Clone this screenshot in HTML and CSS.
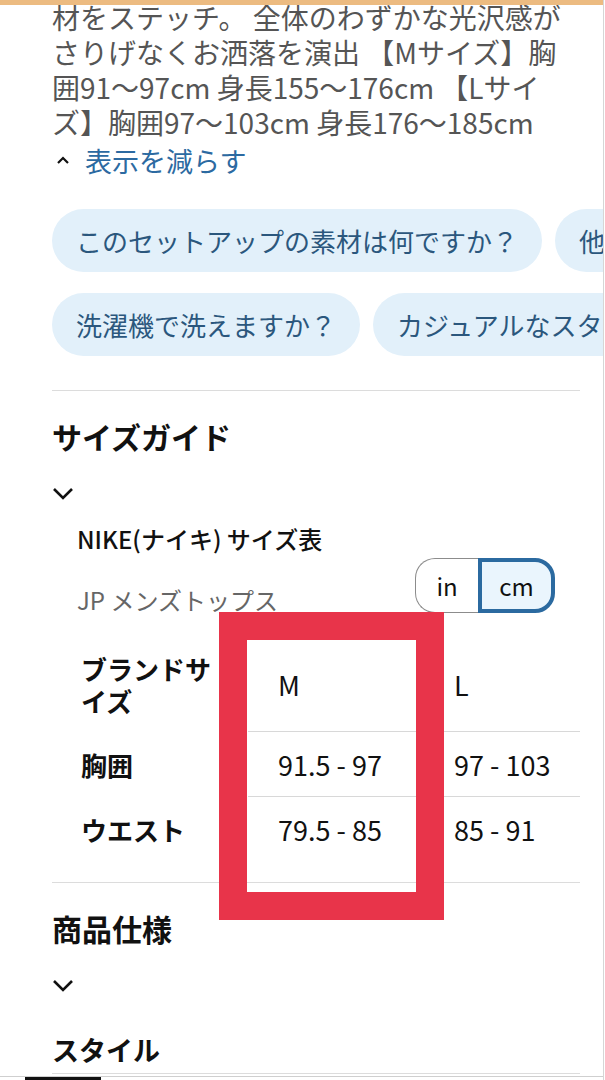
FILE: index.html
```html
<!DOCTYPE html>
<html lang="ja">
<head>
<meta charset="utf-8">
<title>サイズガイド</title>
<link rel="stylesheet" href="styles.css">
</head>
<body>
<div class="page">
  <div class="top-bar"></div>
  <div class="content">
    <p class="desc">材をステッチ。 全体のわずかな光沢感がさりげなくお洒落を演出 【Mサイズ】胸囲91〜97cm 身長155〜176cm 【Lサイズ】胸囲97〜103cm 身長176〜185cm</p>
    <a class="less" href="#">
      <svg class="caret-up" width="12" height="8" viewBox="0 0 12 8"><path d="M1 7 L6 2 L11 7" fill="none" stroke="#111" stroke-width="2.2"/></svg>
      <span>表示を減らす</span>
    </a>

    <div class="chips">
      <div class="chip-row">
        <span class="chip">このセットアップの素材は何ですか？</span>
        <span class="chip">他の色はありますか？</span>
      </div>
      <div class="chip-row">
        <span class="chip">洗濯機で洗えますか？</span>
        <span class="chip">カジュアルなスタイルに合いますか？</span>
      </div>
    </div>

    <div class="divider first"></div>

    <h2 class="section-title">サイズガイド</h2>
    <div class="chevron"><svg width="22" height="13" viewBox="0 0 22 13"><path d="M2 2 L11 11 L20 2" fill="none" stroke="#111" stroke-width="2.6"/></svg></div>

    <div class="size-guide">
      <h3 class="brand-title">NIKE(ナイキ) サイズ表</h3>
      <div class="chart-head">
        <span class="chart-name">JP メンズトップス</span>
        <div class="toggle">
          <span class="seg seg-in">in</span>
          <span class="seg seg-cm">cm</span>
        </div>
      </div>
      <div class="size-table">
        <div class="cell head">ブランドサイズ</div>
        <div class="cell val line">M</div>
        <div class="cell val line">L</div>
        <div class="cell head">胸囲</div>
        <div class="cell val line">91.5 - 97</div>
        <div class="cell val line">97 - 103</div>
        <div class="cell head">ウエスト</div>
        <div class="cell val">79.5 - 85</div>
        <div class="cell val">85 - 91</div>
      </div>
    </div>

    <div class="divider second"></div>

    <h2 class="section-title spec">商品仕様</h2>
    <div class="chevron"><svg width="22" height="13" viewBox="0 0 22 13"><path d="M2 2 L11 11 L20 2" fill="none" stroke="#111" stroke-width="2.6"/></svg></div>
    <h3 class="sub-title">スタイル</h3>
    <div class="divider third"></div>
  </div>
  <div class="bottom-strip"><span class="thumb"></span></div>
  <div class="highlight"></div>
</div>
</body>
</html>
```

FILE: styles.css
```css
html, body {
  margin: 0;
  padding: 0;
  background: #fff;
}

body {
  font-family: "Noto Sans CJK JP", "Noto Sans", sans-serif;
  color: #111;
}

.page {
  position: relative;
  width: 603px;
  height: 1080px;
  border-right: 1px solid #d6d6d6;
  overflow: hidden;
}

.top-bar {
  position: absolute;
  top: 0;
  left: 0;
  right: 0;
  height: 5px;
  background: #ecbb81;
}

.content {
  padding-left: 52px;
  width: 528px;
}

.desc {
  margin: 0;
  font-size: 28px;
  line-height: 35px;
  color: #555;
}

.less {
  display: flex;
  align-items: center;
  height: 40px;
  text-decoration: none;
  color: #2c6aa1;
  font-size: 27px;
}

.caret-up {
  margin-left: 5px;
  margin-right: 16px;
}

.chips {
  margin-top: 29px;
  margin-right: -23px;
  display: flex;
  flex-direction: column;
  gap: 21px;
}

.chip-row {
  display: flex;
  gap: 13px;
  overflow: hidden;
}

.chip {
  flex: none;
  padding: 14px 24px;
  border-radius: 32px;
  background: #e2f0fa;
  color: #2b577d;
  font-size: 26px;
  line-height: 35px;
  white-space: nowrap;
}

.divider {
  height: 1px;
  background: #dcdcdc;
}

.divider.first {
  margin-top: 34px;
}

.divider.second {
  margin-top: 20px;
}

.divider.third {
  margin-top: 4px;
}

.section-title {
  margin: 25px 0 0;
  font-size: 30px;
  line-height: 40px;
  font-weight: 700;
  color: #111;
}

.chevron {
  margin-top: 25px;
  height: 24px;
  display: flex;
  align-items: center;
}

.size-guide {
  padding-left: 25px;
}

.brand-title {
  margin: 17px 0 0;
  font-size: 24px;
  line-height: 34px;
  font-weight: 500;
  color: #111;
}

.chart-head {
  margin-top: 2px;
  display: flex;
  align-items: flex-start;
  justify-content: space-between;
  padding-right: 25px;
}

.chart-name {
  margin-top: 25px;
  font-size: 24px;
  line-height: 34px;
  color: #666;
}

.toggle {
  display: flex;
  height: 55px;
}

.seg {
  display: flex;
  align-items: center;
  justify-content: center;
  box-sizing: border-box;
  font-size: 24px;
  color: #111;
}

.seg-in {
  width: 63px;
  border: 1px solid #8c8c8c;
  border-right: none;
  border-radius: 20px 0 0 20px;
  background: #fff;
}

.seg-cm {
  width: 77px;
  border: 4px solid #2b6aa0;
  border-radius: 0 20px 20px 0;
  background: #eaf5fd;
}

.size-table {
  margin-top: 21px;
  display: grid;
  grid-template-columns: 171px 176px 156px;
  grid-template-rows: 94px 65px 65px;
}

.cell {
  display: flex;
  align-items: center;
  box-sizing: border-box;
}

.cell.head {
  padding: 0 24px 0 4px;
  font-size: 26px;
  line-height: 32px;
  font-weight: 700;
  color: #111;
}

.cell.val {
  padding-left: 30px;
  font-size: 27px;
  color: #111;
}

.cell.line {
  border-bottom: 1px solid #d8d8d8;
}

.sub-title {
  margin: 34px 0 0;
  font-size: 27px;
  line-height: 38px;
  font-weight: 700;
  color: #111;
}

.bottom-strip {
  margin-top: 2px;
  border-top: 1px solid #cfcfcf;
  height: 3px;
}

.thumb {
  display: block;
  margin-left: 25px;
  width: 76px;
  height: 3px;
  background: #111;
}

.highlight {
  position: absolute;
  left: 219px;
  top: 612px;
  width: 225px;
  height: 308px;
  box-sizing: border-box;
  border: 28px solid #e8344a;
}
```
